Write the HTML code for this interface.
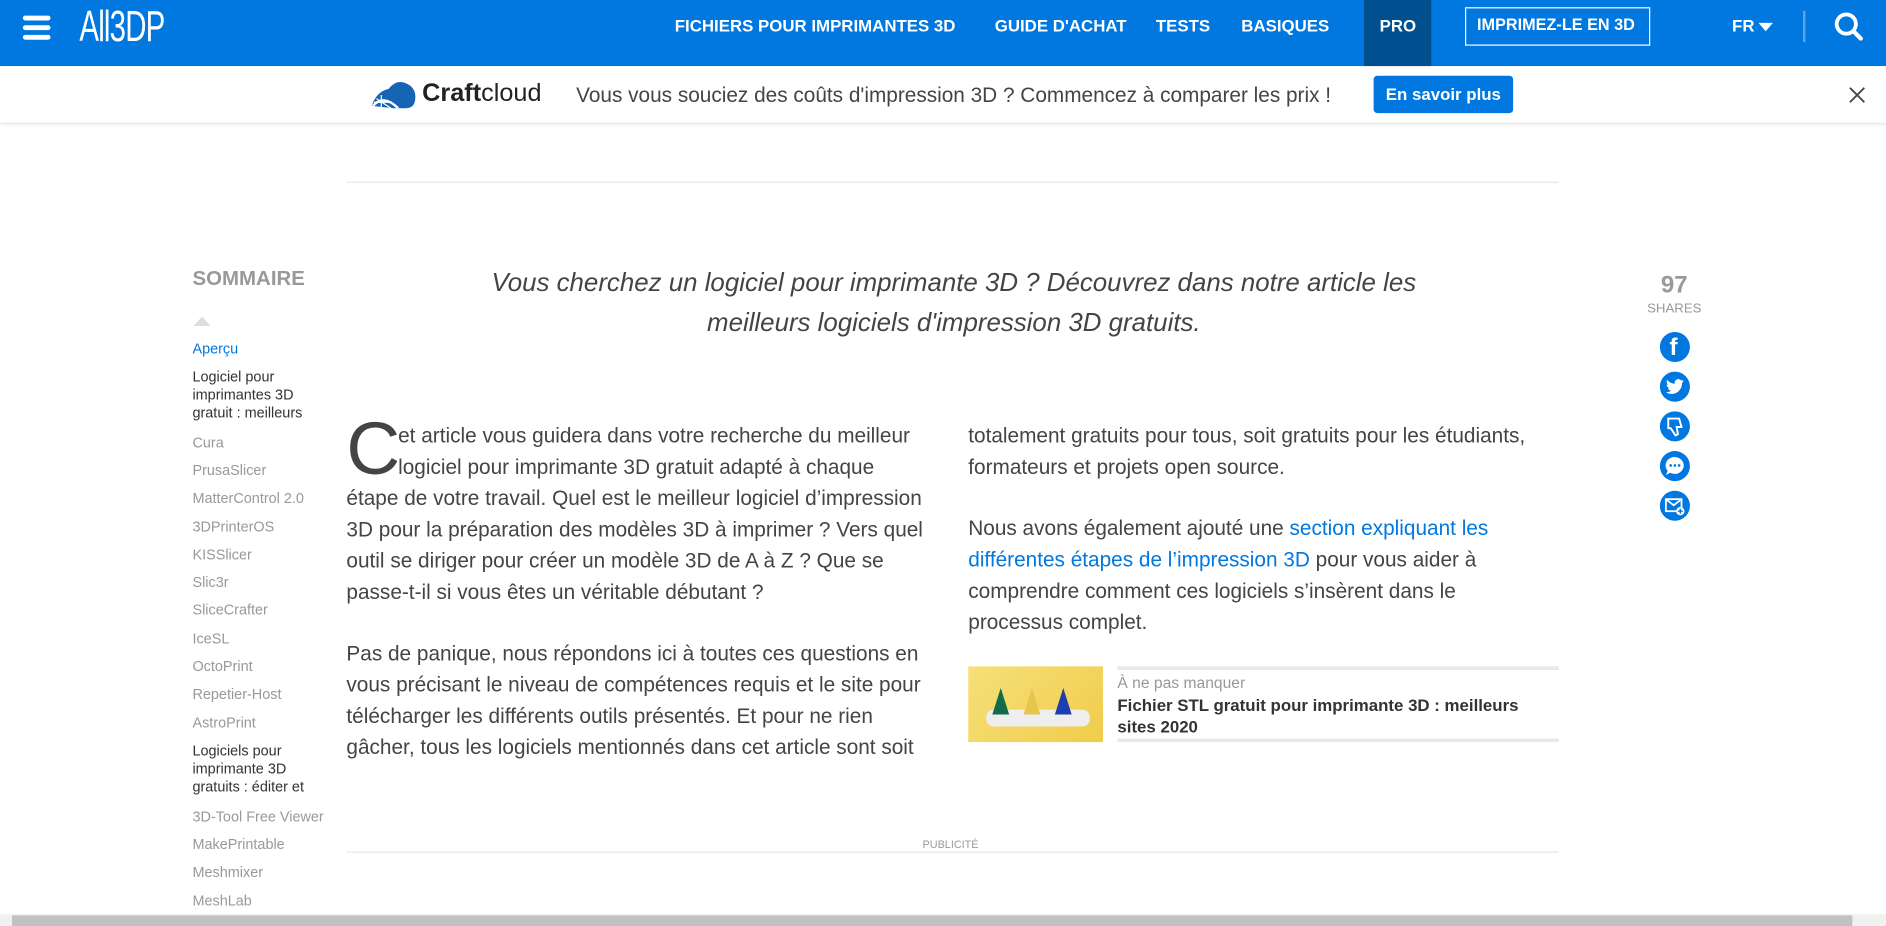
<!DOCTYPE html>
<html><head><meta charset="utf-8"><style>
html,body{margin:0;padding:0;width:1886px;height:926px;overflow:hidden;background:#fff}
#w{position:absolute;left:0;top:0;width:1568px;height:770px;transform:scale(1.2028);transform-origin:0 0;font-family:"Liberation Sans",Arial,sans-serif}
.a{position:absolute;white-space:nowrap}
.hdr{position:absolute;left:0;top:0;width:1568px;height:55px;background:#0078e0}
.nav{position:absolute;top:13px;color:#fff;font-weight:bold;font-size:14px}
.toc{position:absolute;left:160px;font-size:12px;color:#999;line-height:15px;white-space:nowrap}
.toc.d{color:#333}
.p{position:absolute;font-size:17.3px;line-height:26px;color:#444;white-space:nowrap}
.ic{position:absolute;left:1380px;width:25px;height:25px;border-radius:50%;background:#0078e0}
</style></head><body><div id="w">
<div class="hdr"></div>
<div class="a" style="left:19px;top:13px;width:23px;height:4px;background:#fff;border-radius:2px"></div>
<div class="a" style="left:19px;top:21px;width:23px;height:4px;background:#fff;border-radius:2px"></div>
<div class="a" style="left:19px;top:29px;width:23px;height:4px;background:#fff;border-radius:2px"></div>
<div class="a" style="left:66px;top:1px;color:#fff;font-size:36px;letter-spacing:-1px;transform:scaleX(.68);transform-origin:0 0">All3DP</div>
<div class="nav" style="left:561px">FICHIERS POUR IMPRIMANTES 3D</div>
<div class="nav" style="left:827px">GUIDE D'ACHAT</div>
<div class="nav" style="left:961px">TESTS</div>
<div class="nav" style="left:1032px">BASIQUES</div>
<div class="a" style="left:1134px;top:0;width:56px;height:55px;background:#00508f"></div>
<div class="nav" style="left:1147px">PRO</div>
<div class="a" style="left:1218px;top:6px;width:154px;height:32px;border:1px solid #fff;box-sizing:border-box"></div>
<div class="nav" style="left:1228px;font-size:13.5px">IMPRIMEZ-LE EN 3D</div>
<div class="nav" style="left:1440px">FR</div>
<div class="a" style="left:1462px;top:19px;width:0;height:0;border-left:6px solid transparent;border-right:6px solid transparent;border-top:7px solid #fff"></div>
<div class="a" style="left:1499px;top:9px;width:2px;height:26px;background:#5aa5ea"></div>
<svg class="a" style="left:1524px;top:9px" width="28" height="28" viewBox="0 0 28 28"><circle cx="11" cy="11" r="8" fill="none" stroke="#fff" stroke-width="3.2"/><path d="M17 17l6 6" stroke="#fff" stroke-width="3.6" stroke-linecap="round"/></svg>

<div class="a" style="left:0;top:55px;width:1568px;height:47px;background:#fff;box-shadow:0 1px 3px rgba(0,0,0,.12)"></div>
<svg class="a" style="left:307px;top:66px" width="40" height="26" viewBox="0 0 40 26"><path d="M2 22 Q6 10 16 8 Q22 0 30 3 Q40 7 38 18 Q37 24 30 24 L20 24 Z" fill="#1565b4"/><path d="M3 22 Q12 12 24 24" stroke="#fff" stroke-width="2" fill="none"/><path d="M6 16 L18 24 M10 13 L10 24 M4 19 L18 19" stroke="#fff" stroke-width="1"/></svg>
<div class="a" style="left:351px;top:66px;font-size:21px;color:#222"><b>Craft</b>cloud</div>
<div class="a" style="left:479px;top:69px;font-size:17.3px;color:#444">Vous vous souciez des coûts d'impression 3D ? Commencez à comparer les prix !</div>
<div class="a" style="left:1142px;top:63px;width:116px;height:31px;background:#0078e0;border-radius:3px;color:#fff;font-weight:bold;font-size:14px;text-align:center;line-height:31px">En savoir plus</div>
<svg class="a" style="left:1537px;top:72px" width="14" height="14"><path d="M1 1L13 13M13 1L1 13" stroke="#444" stroke-width="1.5"/></svg>

<div class="a" style="left:288px;top:151px;width:1008px;height:1px;background:#e6e6e6"></div>

<div class="a" style="left:160px;top:222px;font-size:17px;font-weight:bold;color:#999">SOMMAIRE</div>
<div class="a" style="left:161px;top:263px;width:0;height:0;border-left:7px solid transparent;border-right:7px solid transparent;border-bottom:8px solid #ddd"></div>
<div class="toc" style="top:283px;color:#0078e0">Aperçu</div>
<div class="toc d" style="top:306px">Logiciel pour<br>imprimantes 3D<br>gratuit : meilleurs</div>
<div class="toc" style="top:361px">Cura</div>
<div class="toc" style="top:384px">PrusaSlicer</div>
<div class="toc" style="top:407px">MatterControl 2.0</div>
<div class="toc" style="top:431px">3DPrinterOS</div>
<div class="toc" style="top:454px">KISSlicer</div>
<div class="toc" style="top:477px">Slic3r</div>
<div class="toc" style="top:500px">SliceCrafter</div>
<div class="toc" style="top:524px">IceSL</div>
<div class="toc" style="top:547px">OctoPrint</div>
<div class="toc" style="top:570px">Repetier-Host</div>
<div class="toc" style="top:594px">AstroPrint</div>
<div class="toc d" style="top:617px">Logiciels pour<br>imprimante 3D<br>gratuits : éditer et</div>
<div class="toc" style="top:672px">3D-Tool Free Viewer</div>
<div class="toc" style="top:695px">MakePrintable</div>
<div class="toc" style="top:718px">Meshmixer</div>
<div class="toc" style="top:742px">MeshLab</div>

<div class="a" style="left:340px;top:219px;width:906px;text-align:center;font-style:italic;font-size:21.5px;line-height:33px;color:#444;white-space:normal">Vous cherchez un logiciel pour imprimante 3D ? Découvrez dans notre article les<br>meilleurs logiciels d'impression 3D gratuits.</div>

<div class="a" style="left:288px;top:344px;font-size:62px;line-height:60px;color:#444">C</div>
<div class="p" style="left:331px;top:349px">et article vous guidera dans votre recherche du meilleur<br>logiciel pour imprimante 3D gratuit adapté à chaque</div>
<div class="p" style="left:288px;top:401px">étape de votre travail. Quel est le meilleur logiciel d’impression<br>3D pour la préparation des modèles 3D à imprimer ? Vers quel<br>outil se diriger pour créer un modèle 3D de A à Z ? Que se<br>passe-t-il si vous êtes un véritable débutant ?</div>
<div class="p" style="left:288px;top:530px">Pas de panique, nous répondons ici à toutes ces questions en<br>vous précisant le niveau de compétences requis et le site pour<br>télécharger les différents outils présentés. Et pour ne rien<br>gâcher, tous les logiciels mentionnés dans cet article sont soit</div>
<div class="p" style="left:805px;top:349px">totalement gratuits pour tous, soit gratuits pour les étudiants,<br>formateurs et projets open source.</div>
<div class="p" style="left:805px;top:426px">Nous avons également ajouté une <span style="color:#0078e0">section expliquant les<br>différentes étapes de l’impression 3D</span> pour vous aider à<br>comprendre comment ces logiciels s’insèrent dans le<br>processus complet.</div>

<div class="a" style="left:805px;top:554px;width:112px;height:63px;background:linear-gradient(135deg,#f6e07a,#f0cc4a)"></div>
<div class="a" style="left:820px;top:590px;width:86px;height:14px;background:#eee;border-radius:6px"></div>
<div class="a" style="left:825px;top:572px;width:0;height:0;border-left:7px solid transparent;border-right:7px solid transparent;border-bottom:22px solid #126b4a"></div>
<div class="a" style="left:851px;top:572px;width:0;height:0;border-left:7px solid transparent;border-right:7px solid transparent;border-bottom:22px solid #e5c54c"></div>
<div class="a" style="left:877px;top:572px;width:0;height:0;border-left:7px solid transparent;border-right:7px solid transparent;border-bottom:22px solid #1e3db0"></div>
<div class="a" style="left:929px;top:554px;width:367px;height:3px;background:#e8e8e8"></div>
<div class="a" style="left:929px;top:614px;width:367px;height:3px;background:#e8e8e8"></div>
<div class="a" style="left:929px;top:560px;font-size:13px;color:#999">À ne pas manquer</div>
<div class="a" style="left:929px;top:577px;font-size:14px;line-height:18px;font-weight:bold;color:#333">Fichier STL gratuit pour imprimante 3D : meilleurs<br>sites 2020</div>

<div class="a" style="left:767px;top:697px;font-size:9px;color:#999">PUBLICITÉ</div>
<div class="a" style="left:288px;top:708px;width:1008px;height:1px;background:#e6e6e6"></div>

<div class="a" style="left:1360px;top:226px;width:64px;text-align:center;font-size:20px;font-weight:bold;color:#999">97</div>
<div class="a" style="left:1360px;top:251px;width:64px;text-align:center;font-size:11px;color:#999">SHARES</div>
<div class="ic" style="top:276px"><span class="a" style="left:8px;top:2px;color:#fff;font-weight:bold;font-size:20px">f</span></div>
<div class="ic" style="top:309px"><svg class="a" style="left:5px;top:6px" width="15" height="13" viewBox="0 0 24 20"><path d="M24 2.5c-.9.4-1.8.6-2.8.8 1-.6 1.8-1.6 2.2-2.7-1 .6-2 1-3.1 1.2C19.3.7 18 0 16.600 0c-2.7 0-4.9 2.2-4.9 4.9 0 .4 0 .8.1 1.1C7.7 5.8 4.1 3.9 1.7.9c-.4.7-.7 1.6-.7 2.5 0 1.7.9 3.200 2.2 4.1-.8 0-1.6-.2-2.2-.6v.1c0 2.4 1.7 4.4 3.9 4.8-.4.1-.8.2-1.3.2-.3 0-.6 0-.9-.1.6 2 2.4 3.4 4.6 3.4-1.7 1.3-3.8 2.1-6.1 2.1-.4 0-.8 0-1.200-.1 2.2 1.4 4.8 2.2 7.5 2.2 9.1 0 14-7.5 14-14v-.6c1-.7 1.8-1.6 2.5-2.5z" fill="#fff"/></svg></div>
<div class="ic" style="top:342px"><svg class="a" style="left:6px;top:5px" width="13" height="16" viewBox="0 0 13 16"><path d="M1 1h9l2 7H8l1 6-2 1-4-6H1z" fill="none" stroke="#fff" stroke-width="1.6"/></svg></div>
<div class="ic" style="top:375px"><svg class="a" style="left:4px;top:4px" width="17" height="17" viewBox="0 0 17 17"><path d="M8.5 1a7.5 7 0 1 1-4 13L1 16l1.5-3.5A7.5 7 0 0 1 8.5 1z" fill="#fff"/><circle cx="5" cy="8" r="1.1" fill="#0078e0"/><circle cx="8.5" cy="8" r="1.1" fill="#0078e0"/><circle cx="12" cy="8" r="1.1" fill="#0078e0"/></svg></div>
<div class="ic" style="top:408px"><svg class="a" style="left:4px;top:5px" width="17" height="16" viewBox="0 0 17 16"><rect x="1" y="2" width="13" height="10" fill="none" stroke="#fff" stroke-width="1.5"/><path d="M1 2l6.5 5L14 2" fill="none" stroke="#fff" stroke-width="1.5"/><circle cx="13" cy="12" r="3.5" fill="#fff"/><path d="M13 10v4M11 12h4" stroke="#0078e0" stroke-width="1.2"/></svg></div>

<div class="a" style="left:0;top:760px;width:1568px;height:10px;background:#f1f1f1"></div>
<div class="a" style="left:10px;top:761px;width:1530px;height:9px;background:#c1c1c1"></div>
</div></body></html>
